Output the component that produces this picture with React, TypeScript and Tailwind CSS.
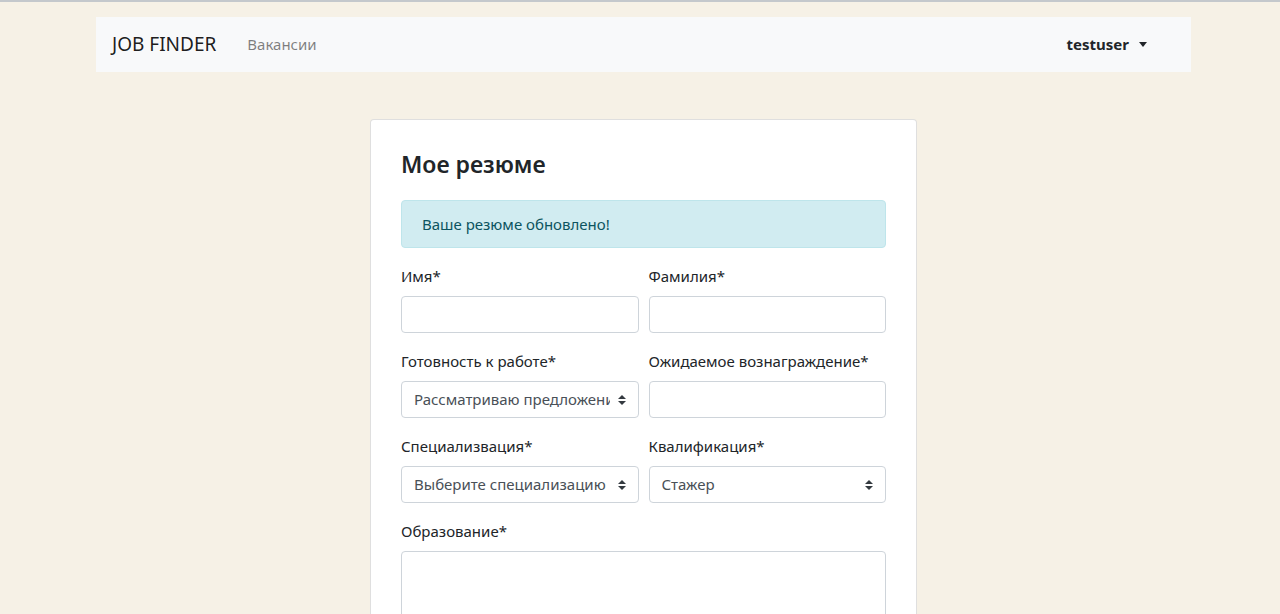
import React from "react";

const font = { fontFamily: '"Noto Sans", "Open Sans", Arial, sans-serif' };

function Caret() {
  return (
    <svg width="8" height="10" viewBox="0 0 4 5" className="shrink-0">
      <path fill="#343a40" d="M2 0L0 2h4zm0 5L0 3h4z" />
    </svg>
  );
}

function Field({ label, children }: { label: string; children: React.ReactNode }) {
  return (
    <div className="flex-1 min-w-0 mb-4">
      <label className="block mb-2 text-[15px] leading-6 text-[#212529]">{label}</label>
      {children}
    </div>
  );
}

function Input() {
  return (
    <div className="h-[37px] w-full rounded border border-[#ced4da] bg-white" />
  );
}

function Select({ value }: { value: string }) {
  return (
    <div className="h-[37px] w-full rounded border border-[#ced4da] bg-white flex items-center pl-3 pr-3 gap-2">
      <span className="flex-1 min-w-0 overflow-hidden whitespace-nowrap text-[15px] text-[#495057]">
        {value}
      </span>
      <Caret />
    </div>
  );
}

export default function App() {
  return (
    <div
      className="min-h-[614px] bg-[#f6f1e6] border-t-2 border-[#c4c8cc] pt-[15px]"
      style={font}
    >
      <div className="ml-[96px] w-[1095px]">
        <nav className="h-[55px] bg-[#f8f9fa] flex items-center px-4">
          <span className="text-[19px] text-[rgba(0,0,0,0.9)] mr-[31px]">JOB FINDER</span>
          <span className="text-[15px] text-[rgba(0,0,0,0.5)]">Вакансии</span>
          <div className="ml-auto mr-[28px] flex items-center gap-[10px]">
            <span className="text-[15px] font-bold text-[#212529]">testuser</span>
            <span className="w-0 h-0 border-l-[4.5px] border-r-[4.5px] border-t-[5px] border-l-transparent border-r-transparent border-t-[#212529]" />
          </div>
        </nav>

        <div className="ml-[274px] mt-[47px] w-[547px] bg-white border border-[rgba(0,0,0,0.125)] rounded p-[30px] pb-0">
          <h4 className="text-[23px] font-semibold leading-[29px] text-[#212529] mb-[21px]">
            Мое резюме
          </h4>
          <div className="rounded bg-[#d1ecf1] border border-[#bee5eb] px-5 py-[11px] text-[15px] leading-6 text-[#0c5460] mb-4">
            Ваше резюме обновлено!
          </div>

          <div className="flex gap-[10px]">
            <Field label="Имя*">
              <Input />
            </Field>
            <Field label="Фамилия*">
              <Input />
            </Field>
          </div>
          <div className="flex gap-[10px]">
            <Field label="Готовность к работе*">
              <Select value="Рассматриваю предложения" />
            </Field>
            <Field label="Ожидаемое вознаграждение*">
              <Input />
            </Field>
          </div>
          <div className="flex gap-[10px]">
            <Field label="Специализвация*">
              <Select value="Выберите специализацию" />
            </Field>
            <Field label="Квалификация*">
              <Select value="Стажер" />
            </Field>
          </div>
          <Field label="Образование*">
            <div className="h-[86px] w-full rounded border border-[#ced4da] bg-white" />
          </Field>
        </div>
      </div>
    </div>
  );
}
